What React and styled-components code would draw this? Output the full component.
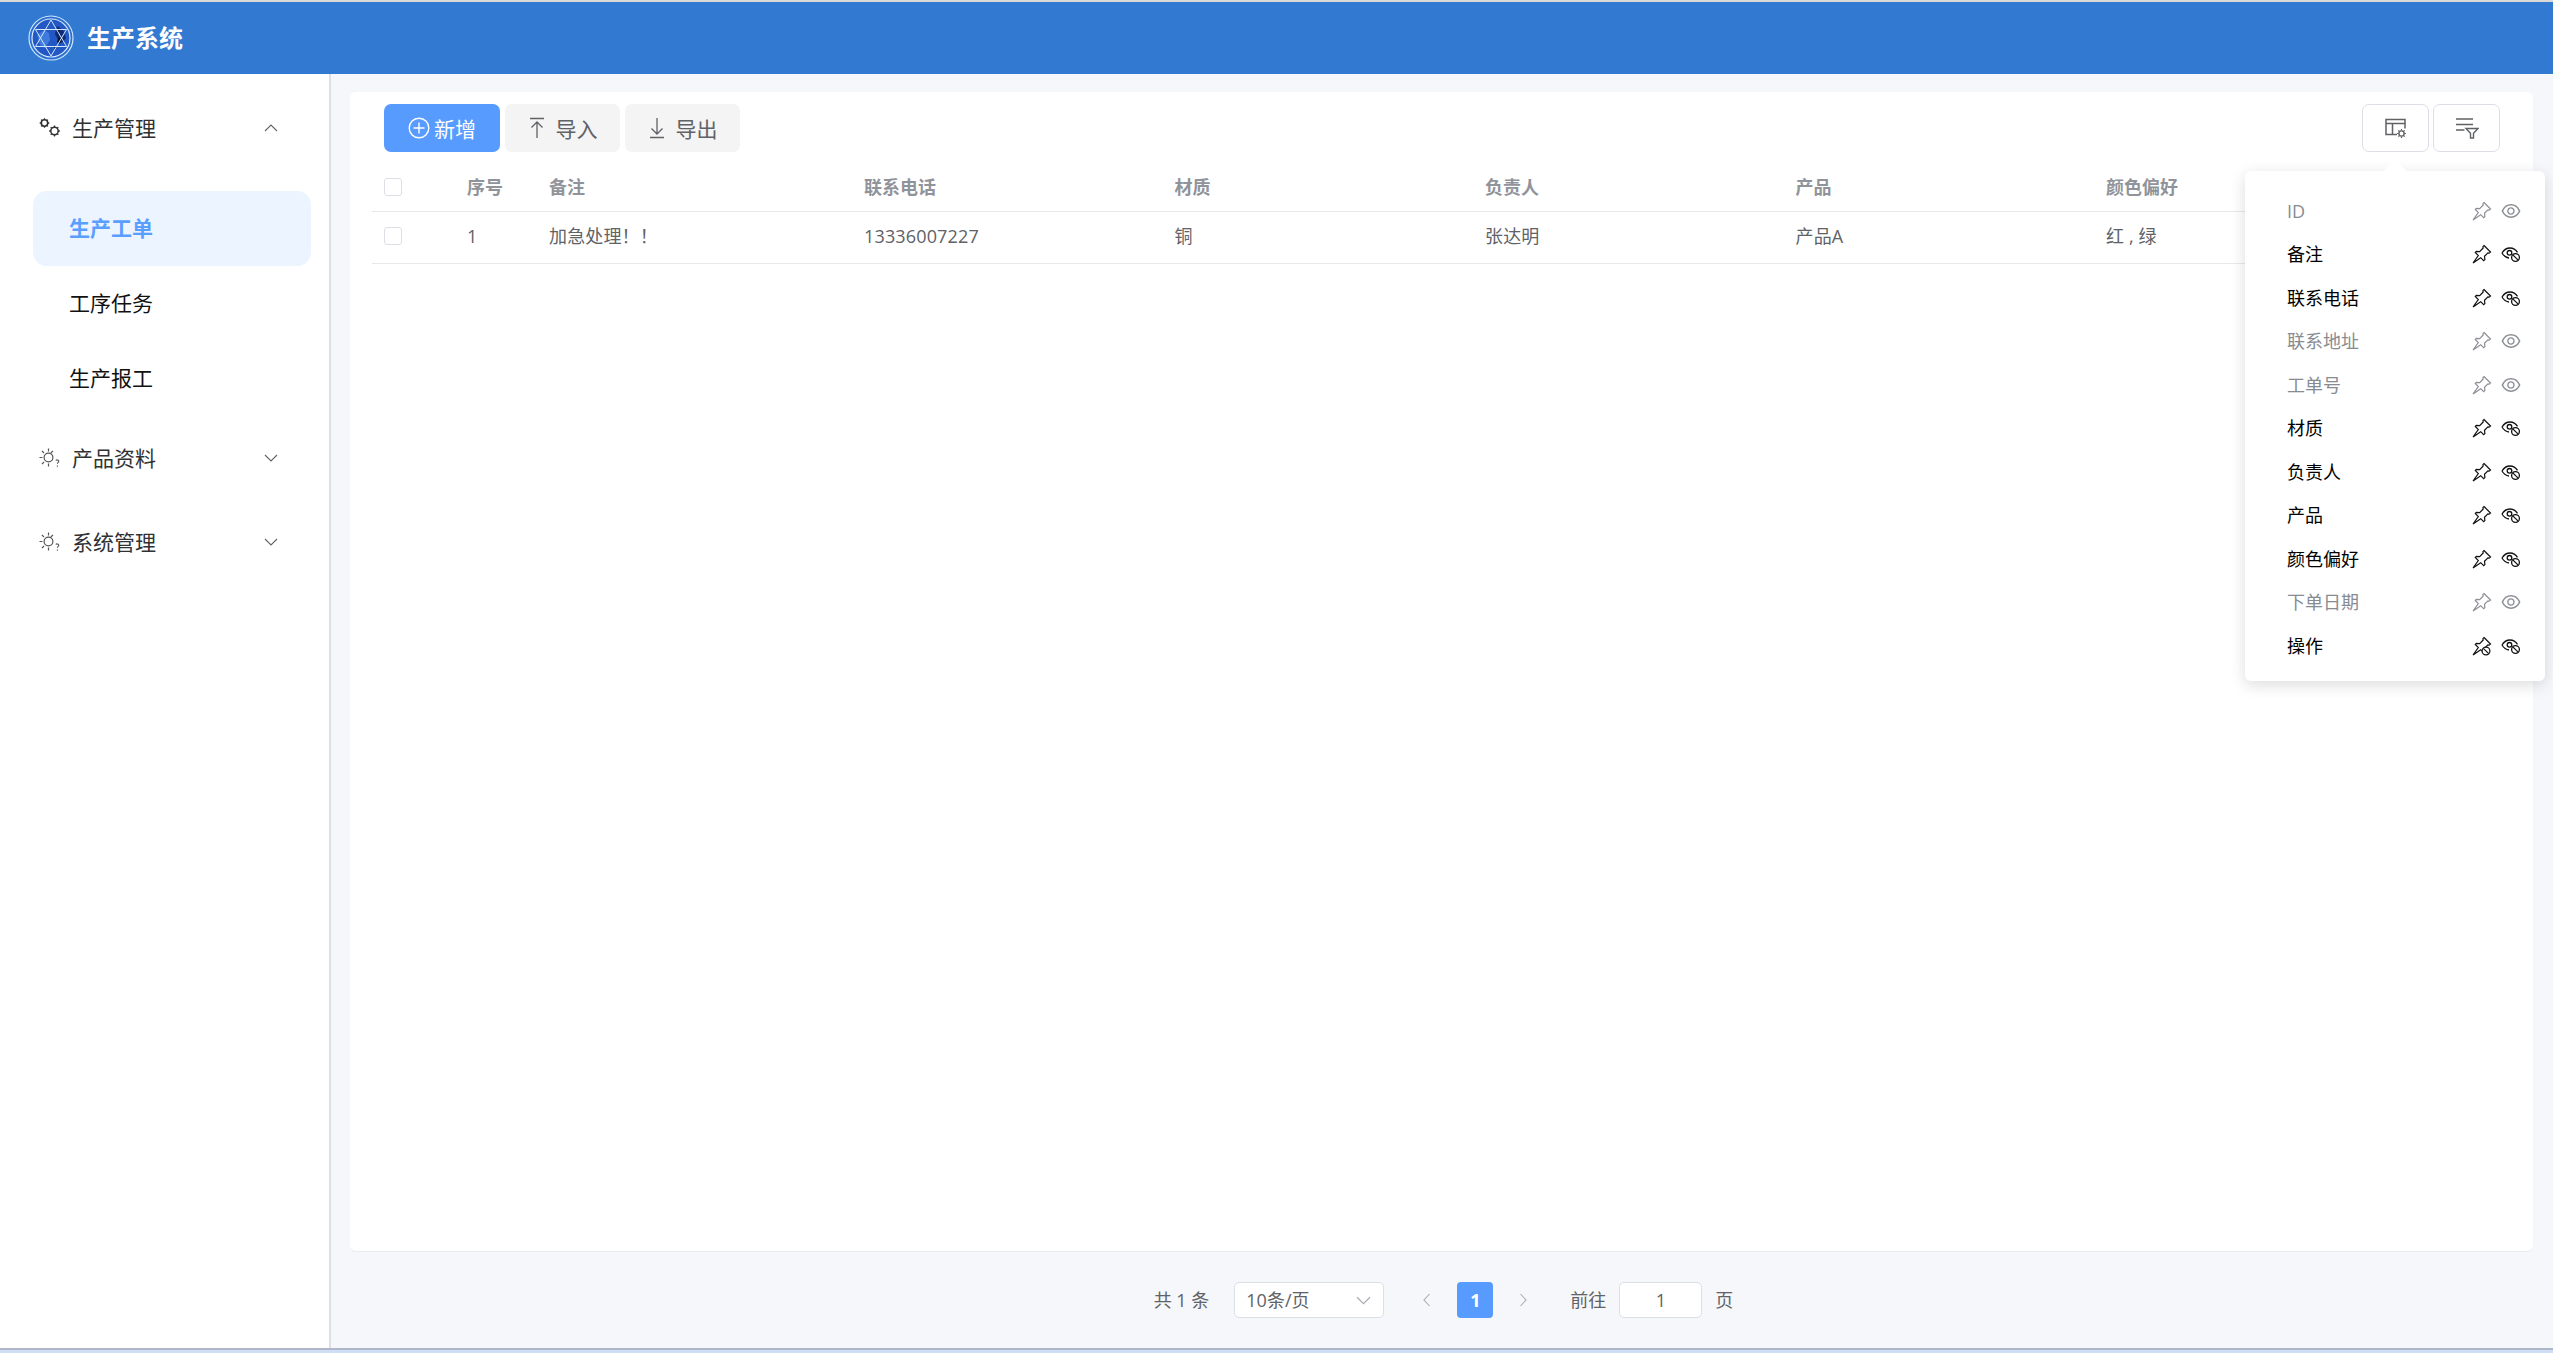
import React from 'react';
import styled, { createGlobalStyle } from 'styled-components';
import { AiOutlineEye } from 'react-icons/ai';

const GlobalStyle = createGlobalStyle`
  html, body { margin: 0; padding: 0; background: #cfddf5; }
  body { font-family: "Open Sans", "Noto Sans CJK SC", "Liberation Sans", sans-serif; }
  * { box-sizing: border-box; }
`;

const columns = [
  { key: 'ID', on: false },
  { key: '备注', on: true },
  { key: '联系电话', on: true },
  { key: '联系地址', on: false },
  { key: '工单号', on: false },
  { key: '材质', on: true },
  { key: '负责人', on: true },
  { key: '产品', on: true },
  { key: '颜色偏好', on: true },
  { key: '下单日期', on: false },
  { key: '操作', on: true, pinOff: true },
];

const Logo = () => (
  <svg width="46" height="46" viewBox="0 0 46 46">
    <circle cx="23" cy="23" r="22" fill="#2c6fd0" stroke="#cfe6fb" strokeWidth="1.2" />
    <circle cx="23" cy="23" r="19" fill="#2257c4" stroke="#d6ebfc" strokeWidth="1.2" />
    <path d="M9 20l7-5 5 3 1 7-5 8-5-3z" fill="#3f7bdc" />
    <path d="M29 11l6 4 3 8-4 5-4-3-3-6z" fill="#0f2a78" />
    <path d="M31 22l3 2-2 5-3-2zM26 31l3 1-2 3zM30 14l2 1-1 3-2-1z" fill="#06102c" />
    <path d="M23 5L38.500 31.500H7.500zM23 41L7.500 14.500H38.500z" fill="none" stroke="#d3e8fb" strokeWidth="1" />
  </svg>
);

const GearsIcon = () => (
  <svg width="22" height="22" viewBox="0 0 22 22" fill="none" stroke="#303133" strokeWidth="1.500">
    <circle cx="5.500" cy="6" r="3.200" />
    <path d="M5.500 1.200v1.600M5.500 9.200v1.600M.7 6h1.600M8.700 6h1.600M2.100 2.600l1.100 1.100M7.800 8.300l1.100 1.100M2.100 9.400l1.100-1.100M7.800 3.700l1.100-1.100" strokeWidth="1.300" />
    <circle cx="15.500" cy="14" r="3.700" />
    <path d="M15.500 8.600v1.700M15.500 17.700v1.700M10.100 14h1.700M19.200 14h1.700M11.700 10.200l1.200 1.200M18.100 16.600l1.200 1.200M11.700 17.800l1.200-1.200M18.100 11.400l1.200-1.200" strokeWidth="1.300" />
  </svg>
);

const SunHelpIcon = () => (
  <svg width="22" height="22" viewBox="0 0 22 22" fill="none" stroke="#555" strokeWidth="1.200">
    <circle cx="9.500" cy="10.500" r="4.400" />
    <path d="M9.500 1.500v3M9.500 16.500v3M.5 10.500h3M2.900 3.900l2.100 2.100M14 3.900l-2.100 2.100M2.900 17.100L5 15" />
    <path d="M17 13.600c.3-1 2.800-1 2.800.6 0 1.200-1.400 1.200-1.400 2.600M18.400 18.600v1.200" strokeWidth="1.100" />
  </svg>
);

const Chevron = ({ dir = 'down', size = 14, color = '#606266' }) => {
  const d = {
    down: 'M1 4l6 6 6-6',
    up: 'M1 10l6-6 6 6',
    left: 'M9.500 1L4 7l5.500 6',
    right: 'M4.500 1L10 7l-5.500 6',
  }[dir];
  return (
    <svg width={size} height={size} viewBox="0 0 14 14" fill="none" stroke={color} strokeWidth="1.100">
      <path d={d} />
    </svg>
  );
};

const PlusCircleIcon = () => (
  <svg width="22" height="22" viewBox="0 0 22 22" fill="none" stroke="#fff" strokeWidth="1.400">
    <circle cx="11" cy="11" r="9.800" />
    <path d="M11 5.500v11M5.500 11h11" />
  </svg>
);

const UploadIcon = () => (
  <svg width="18" height="22" viewBox="0 0 18 22" fill="none" stroke="#606266" strokeWidth="1.300">
    <path d="M2 1.500h14M9 21V5M3.500 10.500L9 5l5.500 5.500" />
  </svg>
);

const DownloadIcon = () => (
  <svg width="18" height="22" viewBox="0 0 18 22" fill="none" stroke="#606266" strokeWidth="1.300">
    <path d="M2 20.500h14M9 1v16M3.500 11.500L9 17l5.500-5.500" />
  </svg>
);

const TableGearIcon = () => (
  <svg width="24" height="22" viewBox="0 0 24 22" fill="none" stroke="#606266" strokeWidth="1.500">
    <path d="M13 17.500H2V2.500h19v9M2 6.500h19M8.500 6.500v11" />
    <circle cx="17.500" cy="16.500" r="2.600" strokeWidth="1.400" />
    <path d="M17.500 12v1.600M17.500 19.400V21M13 16.500h1.600M20.400 16.500H22M14.400 13.400l1 1M19.600 18.600l1 1M14.400 19.600l1-1M19.600 14.400l1-1" strokeWidth="1.200" />
  </svg>
);

const ListFilterIcon = () => (
  <svg width="24" height="22" viewBox="0 0 24 22" fill="none" stroke="#606266" strokeWidth="1.400">
    <path d="M1 2h17M1 7.500h17M1 13h8.500" />
    <path d="M11 11.500h12l-4.500 4.800v4.700h-3v-4.700z" />
  </svg>
);

const PinIcon = ({ off }) => (
  <svg width="22" height="22" viewBox="0 0 22 22" fill="none" stroke="currentColor" strokeWidth="1.200">
    <path d="M13 2.500l6.500 6.500-1.300 1.100-1.300-.3-3.400 3.500.4 3.300-1.200 1.100-3-3L2 20l5.300-7.500-3-3 1-1.200 3.400.3 3.500-3.600-.3-1.300z" />
    {off && (
      <>
        <circle cx="15" cy="16" r="3.900" fill="#fff" />
        <path d="M12.300 13.300l5.400 5.400" />
      </>
    )}
  </svg>
);

const EyeOffIcon = () => (
  <svg width="20" height="18" viewBox="0 0 20 18" fill="none" stroke="#111" strokeWidth="1.300">
    <path d="M1 8c2-3.400 4.600-5 8-5s5.600 1.300 7.500 4.400" />
    <path d="M1 8c1.800 3 4.300 4.700 7 5" />
    <circle cx="8.500" cy="7.800" r="2.300" />
    <circle cx="14.500" cy="12.500" r="3.900" fill="#fff" />
    <path d="M11.800 9.900l5.400 5.200" />
  </svg>
);

const Page = styled.div`
  display: flex;
  flex-direction: column;
  height: 1350px;
  border-top: 2px solid #d9d9d9;
  border-bottom: 2px solid #aeb6ca;
  overflow: hidden;
`;

const Header = styled.header`
  display: flex;
  align-items: center;
  gap: 13px;
  height: 72px;
  flex: none;
  padding-left: 28px;
  background: #3279d2;
  color: #fff;
`;

const Title = styled.h1`
  margin: 0;
  font-size: 24px;
  font-weight: 700;
  line-height: 1;
`;

const Body = styled.div`
  display: flex;
  flex: 1;
  min-height: 0;
`;

const Sidebar = styled.nav`
  width: 331px;
  flex: none;
  padding-top: 12px;
  background: #fff;
  border-right: 2px solid #dcdfe6;
`;

const MenuTitle = styled.div`
  display: flex;
  align-items: center;
  height: 84px;
  padding: 0 51px 0 39px;
  font-size: 21px;
  line-height: 1;
  color: #303133;
  & > span { flex: 1; margin-left: 11px; }
`;

const SubMenu = styled.div`
  padding-top: 21px;
`;

const SubItem = styled.div`
  display: flex;
  align-items: center;
  height: 75px;
  margin: 0 18px 0 33px;
  padding-left: 36px;
  border-radius: 14px;
  font-size: 21px;
  line-height: 1;
  font-weight: ${p => (p.$active ? 700 : 400)};
  color: ${p => (p.$active ? '#5a9eff' : '#111')};
  background: ${p => (p.$active ? '#ecf4ff' : 'transparent')};
`;

const Main = styled.main`
  position: relative;
  display: flex;
  flex-direction: column;
  flex: 1;
  min-width: 0;
  padding: 18px 20px 0 19px;
  background: #f5f7fb;
`;

const Card = styled.section`
  flex: 1;
  padding: 12px 22px 0;
  background: #fff;
  border-radius: 6px;
  border-bottom: 1px solid #e8eaef;
`;

const Toolbar = styled.div`
  display: flex;
  justify-content: space-between;
  padding: 0 11px 0 12px;
  margin-bottom: 11px;
`;

const ButtonGroup = styled.div`
  display: flex;
  gap: ${p => p.$gap || '5px'};
`;

const ActionButton = styled.button`
  display: flex;
  align-items: center;
  justify-content: center;
  gap: ${p => (p.$primary ? '4px' : '10px')};
  width: ${p => (p.$primary ? '116px' : '115px')};
  height: 48px;
  padding: 0;
  border: 0;
  border-radius: 7px;
  font: inherit;
  font-size: 21px;
  color: ${p => (p.$primary ? '#fff' : '#606266')};
  background: ${p => (p.$primary ? '#589bff' : '#f4f4f5')};
`;

const IconButton = styled.button`
  display: flex;
  align-items: center;
  justify-content: center;
  width: 67px;
  height: 48px;
  padding: 0;
  border: 1px solid #dcdfe6;
  border-radius: 7px;
  background: #fff;
`;

const Row = styled.div`
  display: grid;
  grid-template-columns: 82px 82px 315px repeat(4, 310.5px) 1fr;
  align-items: center;
  height: ${p => (p.$head ? '49px' : '52px')};
  padding-bottom: ${p => (p.$head ? '0' : '3px')};
  border-bottom: 1px solid #e6e8ec;
  font-size: 18px;
  line-height: 1;
  letter-spacing: ${p => (p.$head ? '0' : '0.15px')};
  font-weight: ${p => (p.$head ? 700 : 400)};
  color: ${p => (p.$head ? '#909399' : '#606266')};
`;

const Cell = styled.div`
  padding-left: 13px;
`;

const CheckBox = styled.span`
  display: block;
  width: 18px;
  height: 18px;
  margin-left: -1px;
  border: 1px solid #dcdfe6;
  border-radius: 3px;
  background: #fff;
`;

const Popover = styled.div`
  position: absolute;
  top: 97px;
  right: 8px;
  width: 300px;
  padding: 18px 23px 13px 42px;
  background: #fff;
  border-radius: 6px;
  box-shadow: 0 4px 16px rgba(0, 0, 0, 0.14);
  &::before {
    content: '';
    position: absolute;
    top: -8px;
    left: 142px;
    width: 16px;
    height: 16px;
    background: #fff;
    transform: rotate(45deg);
  }
`;

const PopoverRow = styled.div`
  display: flex;
  align-items: center;
  height: 43.5px;
  font-size: 18px;
  line-height: 1;
  color: ${p => (p.$on ? '#000' : '#888b92')};
  & > span { flex: 1; }
`;

const IconSlot = styled.div`
  display: flex;
  align-items: center;
  justify-content: center;
  width: 22px;
  height: 22px;
  color: ${p => (p.$on ? '#111' : '#8c8f96')};
  margin-left: ${p => (p.$second ? '7px' : '0')};
  font-size: 24px;
`;

const Pagination = styled.footer`
  display: flex;
  align-items: center;
  justify-content: center;
  flex: none;
  height: 96px;
  padding-left: 4px;
  font-size: 18px;
  line-height: 1;
  color: #606266;
`;

const Select = styled.div`
  display: flex;
  align-items: center;
  justify-content: space-between;
  width: 150px;
  height: 36px;
  margin: 0 36px 0 25px;
  padding: 0 12px 0 11px;
  background: #fff;
  border: 1px solid #dcdfe6;
  border-radius: 5px;
`;

const PagerButton = styled.div`
  display: flex;
  align-items: center;
  justify-content: center;
  width: 36px;
  height: 36px;
  margin: 0 23px;
  border-radius: 4px;
  font-weight: 700;
  color: #fff;
  background: ${p => (p.$active ? '#589bff' : 'transparent')};
`;

const Jumper = styled.div`
  display: flex;
  align-items: center;
  justify-content: center;
  width: 83px;
  height: 36px;
  margin: 0 13px;
  background: #fff;
  border: 1px solid #dcdfe6;
  border-radius: 5px;
`;

const JumpLabel = styled.span`
  margin-left: 40px;
`;

export default function App() {
  return (
    <Page>
      <GlobalStyle />
      <Header>
        <Logo />
        <Title>生产系统</Title>
      </Header>
      <Body>
        <Sidebar>
          <MenuTitle><GearsIcon /><span>生产管理</span><Chevron dir="up" /></MenuTitle>
          <SubMenu>
            <SubItem $active>生产工单</SubItem>
            <SubItem>工序任务</SubItem>
            <SubItem>生产报工</SubItem>
          </SubMenu>
          <MenuTitle><SunHelpIcon /><span>产品资料</span><Chevron /></MenuTitle>
          <MenuTitle><SunHelpIcon /><span>系统管理</span><Chevron /></MenuTitle>
        </Sidebar>
        <Main>
          <Card>
            <Toolbar>
              <ButtonGroup>
                <ActionButton $primary><PlusCircleIcon />新增</ActionButton>
                <ActionButton><UploadIcon />导入</ActionButton>
                <ActionButton><DownloadIcon />导出</ActionButton>
              </ButtonGroup>
              <ButtonGroup $gap="4px">
                <IconButton><TableGearIcon /></IconButton>
                <IconButton><ListFilterIcon /></IconButton>
              </ButtonGroup>
            </Toolbar>
            <Row $head>
              <Cell><CheckBox /></Cell>
              <Cell>序号</Cell>
              <Cell>备注</Cell>
              <Cell>联系电话</Cell>
              <Cell>材质</Cell>
              <Cell>负责人</Cell>
              <Cell>产品</Cell>
              <Cell>颜色偏好</Cell>
            </Row>
            <Row>
              <Cell><CheckBox /></Cell>
              <Cell>1</Cell>
              <Cell>加急处理！！</Cell>
              <Cell>13336007227</Cell>
              <Cell>铜</Cell>
              <Cell>张达明</Cell>
              <Cell>产品A</Cell>
              <Cell>红 , 绿</Cell>
            </Row>
          </Card>
          <Pagination>
            共 1 条
            <Select>10条/页<Chevron size={15} color="#a8abb2" /></Select>
            <Chevron dir="left" color="#a8abb2" />
            <PagerButton $active>1</PagerButton>
            <Chevron dir="right" color="#a8abb2" />
            <JumpLabel>前往</JumpLabel>
            <Jumper>1</Jumper>
            页
          </Pagination>
          <Popover>
            {columns.map(c => (
              <PopoverRow key={c.key} $on={c.on}>
                <span>{c.key}</span>
                <IconSlot $on={c.on}><PinIcon off={c.pinOff} /></IconSlot>
                <IconSlot $on={c.on} $second>{c.on ? <EyeOffIcon /> : <AiOutlineEye />}</IconSlot>
              </PopoverRow>
            ))}
          </Popover>
        </Main>
      </Body>
    </Page>
  );
}
